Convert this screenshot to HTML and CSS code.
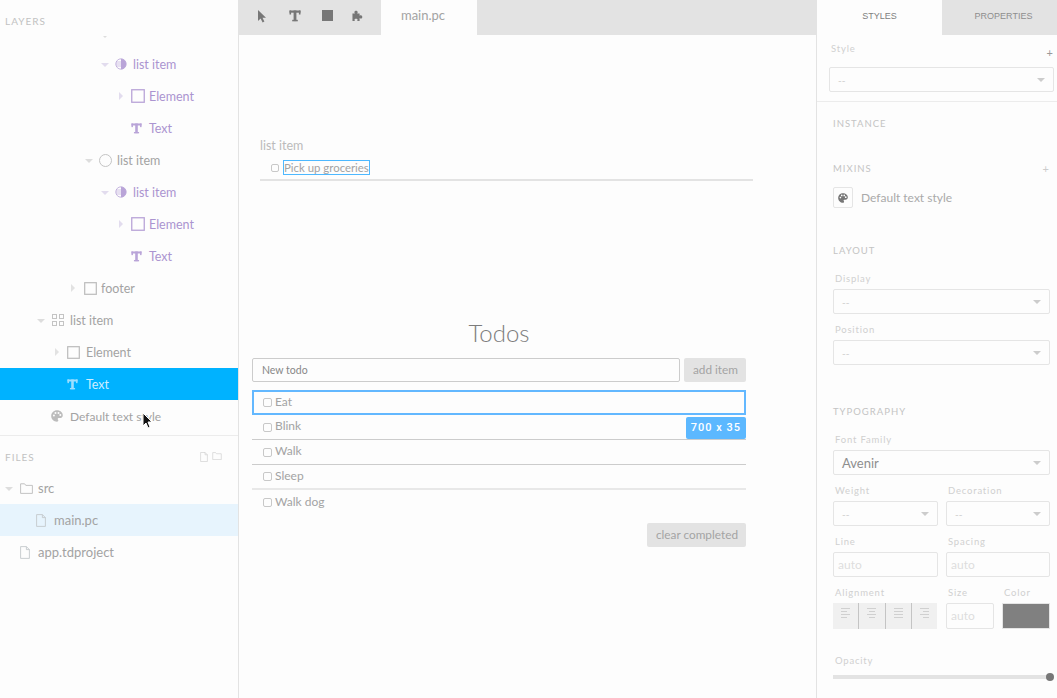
FILE: index.html
```html
<!DOCTYPE html>
<html lang="en">
<head>
    <meta charset="UTF-8">
    <meta name="viewport" content="width=device-width, initial-scale=1.0">
    <title>Tandem - main.pc</title>
    <link rel="stylesheet" href="styles.css">
</head>
<body>
    <!-- Shared icons -->
    <svg class="sprite" width="0" height="0">
        <symbol id="i-text" viewBox="0 0 12 12">
            <rect x="0.5" y="0.5" width="11" height="2.2"/>
            <rect x="0.5" y="0.5" width="1.6" height="4"/>
            <rect x="9.9" y="0.5" width="1.6" height="4"/>
            <rect x="4.6" y="0.5" width="2.8" height="10.6"/>
            <rect x="3.2" y="9.8" width="5.6" height="1.5"/>
        </symbol>
        <symbol id="i-box" viewBox="0 0 14 14">
            <rect x="0.75" y="0.75" width="12.5" height="12.5" fill="none" stroke="currentColor" stroke-width="1.3"/>
        </symbol>
        <symbol id="i-half" viewBox="0 0 12 12">
            <circle cx="6" cy="6" r="5.2" fill="none" stroke="currentColor" stroke-width="0.8"/>
            <path d="M6 .8a5.2 5.2 0 0 1 0 10.4z"/>
            <path d="M1.2 4h4.8M.9 6h5.1M1.2 8h4.8" stroke="currentColor" stroke-width="0.9" opacity="0.7"/>
        </symbol>
        <symbol id="i-palette" viewBox="0 0 12 12">
            <path fill-rule="evenodd" d="M6 .3C2.8.3.2 2.8.2 6s2.6 5.7 5.8 5.7c.8 0 1.3-.6 1.3-1.2 0-.8-.6-1-.6-1.6 0-.5.4-.9 1-.9h1.4c1.5 0 2.7-1.100 2.700-2.600C11.800 2.500 9.200.3 6 .3zM2.900 6.500a1 1 0 1 1 0-2 1 1 0 0 1 0 2zM4.500 3.900a1 1 0 1 1 0-2 1 1 0 0 1 0 2zM7.500 3.900a1 1 0 1 1 0-2 1 1 0 0 1 0 2zM9.300 6a1 1 0 1 1 0-2 1 1 0 0 1 0 2z"/>
        </symbol>
        <symbol id="i-file" viewBox="0 0 10 13">
            <path d="M.6.6h5.800l3 3v8.800H.6zM6.400.6v3h3" fill="none" stroke="currentColor" stroke-width="0.9"/>
        </symbol>
        <symbol id="i-folder" viewBox="0 0 13 11">
            <path d="M.6 10.400V.8h4l1.200 1.600h6.600v8z" fill="none" stroke="currentColor" stroke-width="0.9"/>
        </symbol>
    </svg>

    <div class="app">
        <!-- Left sidebar -->
        <aside class="sidebar">
            <section class="layers">
                <div class="panel-title">LAYERS</div>
                <div class="tree">
                    <div class="row row-cut lvl-4"><span class="caret down"></span></div>
                    <div class="row purple lvl-4"><span class="caret down"></span><span class="ico"><svg width="12" height="12"><use href="#i-half"/></svg></span>list item</div>
                    <div class="row purple lvl-5"><span class="caret right"></span><span class="ico"><svg width="14" height="14"><use href="#i-box"/></svg></span>Element</div>
                    <div class="row purple lvl-5"><span class="caret"></span><span class="ico"><svg width="11" height="11"><use href="#i-text"/></svg></span>Text</div>
                    <div class="row lvl-3"><span class="caret down"></span><span class="ico"><span class="ring"></span></span>list item</div>
                    <div class="row purple lvl-4"><span class="caret down"></span><span class="ico"><svg width="12" height="12"><use href="#i-half"/></svg></span>list item</div>
                    <div class="row purple lvl-5"><span class="caret right"></span><span class="ico"><svg width="14" height="14"><use href="#i-box"/></svg></span>Element</div>
                    <div class="row purple lvl-5"><span class="caret"></span><span class="ico"><svg width="11" height="11"><use href="#i-text"/></svg></span>Text</div>
                    <div class="row lvl-2"><span class="caret right"></span><span class="ico"><svg width="13" height="13"><use href="#i-box"/></svg></span>footer</div>
                    <div class="row lvl-0"><span class="caret down"></span><span class="ico"><span class="grid-ico"><i></i><i></i><i></i><i></i></span></span>list item</div>
                    <div class="row lvl-1"><span class="caret right"></span><span class="ico"><svg width="13" height="13"><use href="#i-box"/></svg></span>Element</div>
                    <div class="row selected lvl-1"><span class="caret"></span><span class="ico"><svg width="11" height="11"><use href="#i-text"/></svg></span>Text</div>
                    <div class="row mixin-row lvl-0"><span class="caret"></span><span class="ico"><svg width="12" height="12"><use href="#i-palette"/></svg></span>Default text style</div>
                </div>
                <!-- Mouse pointer -->
                <svg class="pointer" width="12" height="18" viewBox="0 0 12 18">
                    <path d="M1 1v13l3-3 2 5 2-1-2-5h4z" fill="#111" stroke="#fff" stroke-width="1"/>
                </svg>
            </section>

            <section class="files">
                <div class="files-head">
                    <span class="panel-title">FILES</span>
                    <span class="files-actions">
                        <svg width="8" height="10"><use href="#i-file"/></svg>
                        <svg width="10" height="8"><use href="#i-folder"/></svg>
                    </span>
                </div>
                <div class="row file-src"><span class="caret down"></span><span class="ico"><svg width="13" height="11"><use href="#i-folder"/></svg></span>src</div>
                <div class="row file-main"><span class="ico"><svg width="10" height="13"><use href="#i-file"/></svg></span>main.pc</div>
                <div class="row file-app"><span class="ico"><svg width="10" height="13"><use href="#i-file"/></svg></span>app.tdproject</div>
            </section>
        </aside>

        <!-- Center canvas -->
        <main class="center">
            <div class="toolbar">
                <div class="tools">
                    <svg width="10" height="14" viewBox="0 0 10 14"><path d="M1 1v11l2.600-2.600 2 4 1.800-.9-1.900-3.800H9z"/></svg>
                    <svg width="12" height="12"><use href="#i-text"/></svg>
                    <span class="tool-square"></span>
                    <svg width="11" height="12" viewBox="0 0 12 12"><path d="M.5 3.200h2.700c-.5-.6-.6-1-.6-1.400C2.600.9 3.400.3 4.400.3s1.800.6 1.800 1.500c0 .4-.1.800-.6 1.400h2.700v2.600c.6-.5 1-.6 1.400-.6.900 0 1.500.8 1.500 1.800s-.6 1.800-1.500 1.800c-.4 0-.8-.1-1.400-.6v3.300H5.600c.4-.6.500-.9.500-1.300 0-.8-.7-1.300-1.700-1.300s-1.700.5-1.700 1.300c0 .4.100.7.500 1.300H.5z"/></svg>
                </div>
                <div class="file-tab">main.pc</div>
            </div>

            <div class="canvas">
                <div class="artboard-small">
                    <div class="artboard-name">list item</div>
                    <div class="small-row">
                        <span class="check"></span>
                        <span class="picked">Pick up groceries</span>
                    </div>
                </div>

                <div class="artboard-todos">
                    <h1>Todos</h1>
                    <div class="add-row">
                        <div class="todo-input">New todo</div>
                        <div class="btn add-btn">add item</div>
                    </div>
                    <div class="todo focused"><span class="check"></span>Eat</div>
                    <div class="todo"><span class="check"></span>Blink<span class="size-badge">700 x 35</span></div>
                    <div class="todo"><span class="check"></span>Walk</div>
                    <div class="todo light"><span class="check"></span>Sleep</div>
                    <div class="todo last"><span class="check"></span>Walk dog</div>
                    <div class="todo-foot"><div class="btn">clear completed</div></div>
                </div>
            </div>
        </main>

        <!-- Right inspector -->
        <aside class="inspector">
            <div class="tabs">
                <div class="tab active">STYLES</div>
                <div class="tab">PROPERTIES</div>
            </div>

            <section class="style-pick">
                <div class="style-label"><label>Style</label><span class="plus dark">+</span></div>
                <div class="select">--</div>
            </section>

            <section class="group instance"><h2>INSTANCE</h2></section>

            <section class="group mixins">
                <div class="heading-row"><h2>MIXINS</h2><span class="plus">+</span></div>
                <div class="mixin">
                    <span class="mixin-ico"><svg width="10" height="10"><use href="#i-palette"/></svg></span>
                    Default text style
                </div>
            </section>

            <section class="group layout">
                <h2>LAYOUT</h2>
                <div class="field"><label>Display</label><div class="select">--</div></div>
                <div class="field"><label>Position</label><div class="select">--</div></div>
            </section>

            <section class="group typography">
                <h2>TYPOGRAPHY</h2>
                <div class="field"><label>Font Family</label><div class="select filled">Avenir</div></div>
                <div class="field-row">
                    <div class="field"><label>Weight</label><div class="select">--</div></div>
                    <div class="field"><label>Decoration</label><div class="select">--</div></div>
                </div>
                <div class="field-row">
                    <div class="field"><label>Line</label><div class="input">auto</div></div>
                    <div class="field"><label>Spacing</label><div class="input">auto</div></div>
                </div>
                <div class="field-row">
                    <div class="field"><label>Alignment</label>
                        <div class="align-group">
                            <span class="align left"><i></i><i></i><i></i><i></i></span>
                            <span class="align center-a"><i></i><i></i><i></i><i></i></span>
                            <span class="align full"><i></i><i></i><i></i><i></i></span>
                            <span class="align right-a"><i></i><i></i><i></i><i></i></span>
                        </div>
                    </div>
                    <div class="field-pair">
                        <div class="field"><label>Size</label><div class="input">auto</div></div>
                        <div class="field"><label>Color</label><div class="swatch"></div></div>
                    </div>
                </div>
                <div class="field opacity"><label>Opacity</label><div class="slider"><span class="knob"></span></div></div>
            </section>
        </aside>
    </div>
</body>
</html>
```

FILE: styles.css
```css
* {
    box-sizing: border-box;
}
html, body {
    margin: 0;
    height: 100%;
    overflow: hidden;
}
body {
    font-family: Lato, "Open Sans", sans-serif;
    font-size: 13px;
    color: #a3a3a3;
    background: #fdfdfd;
}
.sprite {
    position: absolute;
}
svg {
    display: block;
    fill: currentColor;
}
.app {
    display: flex;
    height: 100vh;
}

/* Left sidebar */
.sidebar {
    width: 239px;
    flex: none;
    border-right: 1px solid #e3e3e3;
}
.layers {
    position: relative;
    height: 436px;
    border-bottom: 1px solid #ececec;
}
.panel-title {
    display: block;
    padding-left: 5px;
    font-size: 10px;
    line-height: 12px;
    letter-spacing: 1px;
    color: #c2c2c2;
}
.layers .panel-title {
    padding-top: 15px;
    height: 36px;
}
.tree {
    height: 399px;
    overflow: hidden;
    font-size: 12.5px;
}
.row {
    display: flex;
    align-items: center;
    height: 32px;
    white-space: nowrap;
}
.row-cut {
    height: 12px;
    align-items: flex-start;
}
.row-cut .caret.down {
    height: 3px;
    overflow: hidden;
}
.row-cut .caret.down::before {
    margin-top: -2px;
}
.mixin-row {
    font-size: 12px;
}
.lvl-0 { padding-left: 33px; }
.lvl-1 { padding-left: 49px; }
.lvl-2 { padding-left: 65px; }
.lvl-3 { padding-left: 81px; }
.lvl-4 { padding-left: 97px; }
.lvl-5 { padding-left: 113px; }
.lvl-2 .ico, .lvl-3 .ico, .lvl-4 .ico, .lvl-5 .ico {
    width: 20px;
}
.lvl-2 .ico {
    padding-left: 3px;
}
.purple {
    color: #ab94d0;
}
.purple .ico {
    color: #b9a4d8;
}
.selected {
    background: #00b2ff;
    color: #cfeeff;
}
.selected .ico {
    color: #9fdfff;
}
.caret {
    width: 16px;
    flex: none;
    display: flex;
    justify-content: center;
}
.caret.down::before {
    content: "";
    border-left: 4px solid transparent;
    border-right: 4px solid transparent;
    border-top: 4px solid #ddd;
    margin-top: 1px;
}
.caret.right::before {
    content: "";
    border-top: 4px solid transparent;
    border-bottom: 4px solid transparent;
    border-left: 4px solid #e2e2e2;
}
.purple .caret.down::before {
    border-top-color: #e2dcee;
}
.purple .caret.right::before {
    border-left-color: #e2dcee;
}
.ico {
    width: 21px;
    flex: none;
    padding-left: 2px;
    color: #bcbcbc;
}
.ring {
    display: block;
    width: 13px;
    height: 13px;
    border: 1px solid #c4c4c4;
    border-radius: 50%;
}
.grid-ico {
    display: grid;
    grid-template-columns: 5px 5px;
    gap: 2px;
    width: 12px;
    margin-left: 1px;
}
.grid-ico i {
    height: 5px;
    border: 1px solid #c4c4c4;
}
.pointer {
    position: absolute;
    left: 142px;
    top: 412px;
}

.files-head {
    display: flex;
    justify-content: space-between;
    align-items: center;
    height: 36px;
    padding: 6px 16px 0 0;
}
.files-actions {
    display: flex;
    gap: 4px;
    color: #d0d0d0;
}
.file-src {
    padding-left: 1px;
}
.file-main {
    padding-left: 35px;
    background: #e7f4fd;
}
.file-app {
    padding-left: 19px;
}
.file-src .ico {
    padding-left: 3px;
}
.file-main .ico, .file-app .ico {
    padding-left: 1px;
    width: 19px;
    color: #c4c8cc;
}

/* Center canvas */
.center {
    flex: 1;
    min-width: 0;
}
.toolbar {
    display: flex;
    height: 35px;
    background: #e3e3e3;
}
.tools {
    display: flex;
    align-items: center;
    gap: 22px;
    width: 142px;
    padding: 0 0 4px 18px;
    color: #777;
}
.tool-square {
    width: 11px;
    height: 11px;
    margin: 0 -3px 0 -1px;
    background: #777;
}
.file-tab {
    width: 96px;
    padding-right: 12px;
    background: #fdfdfd;
    text-align: center;
    line-height: 31px;
}
.canvas {
    padding: 0 70px 0 13px;
}
.artboard-small {
    padding: 102px 0 0 8px;
    width: 501px;
}
.artboard-name {
    font-size: 12.5px;
    line-height: 17px;
    color: #bbb;
}
.small-row {
    display: flex;
    align-items: center;
    height: 27px;
    padding: 4px 0 3px 11px;
    border-bottom: 2px solid #e3e3e3;
    font-size: 11.4px;
}
.small-row .check {
    margin-right: 4px;
    margin-top: 1px;
}
.picked {
    height: 15px;
    line-height: 13px;
    border: 1px solid #4db8ff;
    white-space: nowrap;
}
.check {
    display: block;
    width: 8px;
    height: 8px;
    flex: none;
    border: 1px solid #c8c8c8;
    border-radius: 2px;
}
.artboard-todos {
    margin-top: 136px;
    width: 494px;
}
h1 {
    margin: 0;
    height: 41px;
    font-size: 24px;
    font-weight: 300;
    line-height: 32px;
    text-align: center;
    color: #7c7c7c;
}
.add-row {
    display: flex;
    gap: 4px;
    height: 24px;
    margin-bottom: 8px;
}
.todo-input {
    flex: 1;
    padding-left: 9px;
    border: 1px solid #ccc;
    border-radius: 2px;
    font-size: 10.5px;
    line-height: 23px;
    color: #888;
}
.btn {
    padding: 0 8px 0 9px;
    background: #e3e3e3;
    border-radius: 2px;
    font-size: 11.800px;
    line-height: 24px;
    color: #a3a3a3;
}
.todo {
    position: relative;
    display: flex;
    align-items: center;
    height: 25px;
    padding: 0 0 2px 11px;
    border-bottom: 1px solid #ccc;
    font-size: 12px;
    line-height: 16px;
}
.todo .check {
    width: 9px;
    height: 9px;
    margin: 2px 3px 0 0;
}
.todo.light {
    border-bottom: 2px solid #e8e8e8;
}
.todo.last {
    border-bottom: 0;
}
.focused {
    padding-left: 9px;
    border: 2px solid #63b8ff;
}
.size-badge {
    position: absolute;
    right: 0;
    top: 2px;
    width: 60px;
    height: 22px;
    background: #5cb8ff;
    border-radius: 2px;
    font-family: Roboto, sans-serif;
    font-size: 11px;
    font-weight: 500;
    letter-spacing: 1px;
    line-height: 22px;
    text-align: center;
    color: #fff;
}
.todo-foot {
    display: flex;
    justify-content: flex-end;
    margin-top: 8px;
}

/* Right inspector */
.inspector {
    width: 241px;
    flex: none;
    border-left: 1px solid #e3e3e3;
    margin-left: -1px;
    position: relative;
}
.tabs {
    display: flex;
    height: 35px;
}
.tab {
    flex: 1;
    padding-left: 8px;
    font-family: "Liberation Sans", sans-serif;
    font-size: 9px;
    line-height: 33px;
    text-align: center;
    background: #e3e3e3;
    color: #8e8e8e;
}
.tab.active {
    flex: none;
    width: 125px;
    padding-left: 0;
    background: #fdfdfd;
    color: #808080;
}
.style-pick {
    height: 67px;
    padding: 8px 3px 0 12px;
    border-bottom: 1px solid #ececec;
}
.style-label {
    display: flex;
    justify-content: space-between;
    height: 24px;
    padding: 0 1px 0 2px;
}
label {
    display: block;
    height: 12px;
    margin-bottom: 4px;
    padding-left: 2px;
    font-size: 9.5px;
    line-height: 12px;
    letter-spacing: 0.8px;
    color: #d0d0d0;
}
.style-label label {
    padding-left: 0;
}
.plus {
    font-size: 11px;
    line-height: 12px;
    color: #ccc;
}
.plus.dark {
    margin-top: 4px;
    color: #999;
}
.select, .input {
    position: relative;
    height: 25px;
    padding-left: 8px;
    background: #fdfdfd;
    border: 1px solid #e5e5e5;
    border-radius: 2px;
    font-size: 10px;
    line-height: 25px;
    color: #ccc;
}
.select::after {
    content: "";
    position: absolute;
    right: 8px;
    top: 10px;
    border-left: 4px solid transparent;
    border-right: 4px solid transparent;
    border-top: 4px solid #ccc;
}
.select.filled {
    font-size: 13px;
    line-height: 24px;
    color: #8e8e8e;
}
.input {
    padding-left: 4px;
    font-size: 12px;
    line-height: 24px;
    color: #ddd;
}
.group {
    padding: 0 7px 0 16px;
}
h2 {
    margin: 0;
    height: 12px;
    font-size: 9.5px;
    font-weight: 400;
    line-height: 12px;
    letter-spacing: 1px;
    color: #c4c4c4;
}
.instance {
    padding-top: 16px;
}
.mixins {
    margin-top: 33px;
}
.heading-row {
    display: flex;
    justify-content: space-between;
    padding-right: 1px;
}
.mixin {
    display: flex;
    align-items: center;
    gap: 8px;
    margin-top: 12px;
    font-size: 12px;
    color: #aaa;
}
.mixin-ico {
    display: flex;
    align-items: center;
    justify-content: center;
    width: 20px;
    height: 21px;
    border: 1px solid #e5e5e5;
    border-radius: 2px;
    color: #777;
}
.layout {
    margin-top: 37px;
}
.typography {
    margin-top: 41px;
}
.field {
    margin-top: 10px;
}
h2 + .field {
    margin-top: 16px;
}
.field-row {
    display: grid;
    grid-template-columns: 105px 104px;
    gap: 8px;
}
.field-pair {
    display: grid;
    grid-template-columns: 48px 48px;
    gap: 8px;
}
.align-group {
    display: flex;
    width: 104px;
    height: 26px;
    background: #f0f0f0;
}
.align {
    flex: 1;
    display: flex;
    flex-direction: column;
    gap: 2px;
    padding: 5px 8px 0;
    border-left: 1px solid #c4c4c4;
}
.align:first-child {
    border-left: 0;
}
.align i {
    display: block;
    height: 1px;
    width: 9px;
    background: #d0d0d0;
}
.align i:nth-child(even) {
    width: 6px;
}
.align.center-a {
    align-items: center;
}
.align.right-a {
    align-items: flex-end;
}
.align.full i {
    width: 9px;
}
.field-pair .input {
    height: 26px;
}
.swatch {
    height: 26px;
    background: #808080;
    border: 1px solid #e5e5e5;
}
.opacity {
    margin-top: 26px;
}
.opacity label {
    margin-bottom: 2px;
}
.slider {
    position: relative;
    height: 4px;
    margin-top: 8px;
    background: #e3e3e3;
}
.knob {
    position: absolute;
    right: -4px;
    top: -2px;
    width: 8px;
    height: 8px;
    background: #777;
    border-radius: 50%;
}
```
